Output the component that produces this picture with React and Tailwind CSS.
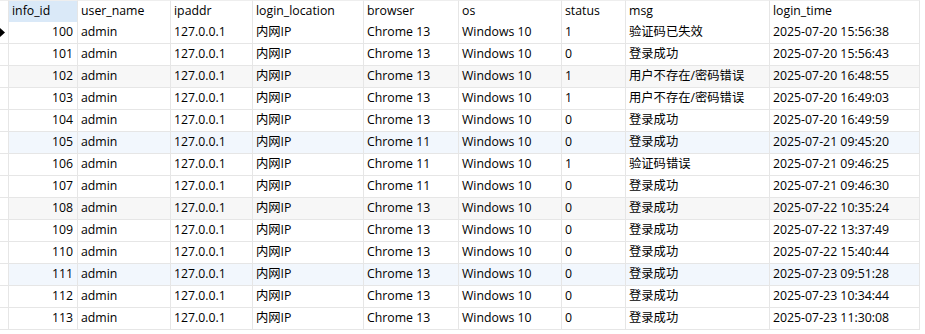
import React from "react";

const rows = [
  [100, "1", "验证码已失效", "2025-07-20 15:56:38", "Chrome 13"],
  [101, "0", "登录成功", "2025-07-20 15:56:43", "Chrome 13"],
  [102, "1", "用户不存在/密码错误", "2025-07-20 16:48:55", "Chrome 13"],
  [103, "1", "用户不存在/密码错误", "2025-07-20 16:49:03", "Chrome 13"],
  [104, "0", "登录成功", "2025-07-20 16:49:59", "Chrome 13"],
  [105, "0", "登录成功", "2025-07-21 09:45:20", "Chrome 11"],
  [106, "1", "验证码错误", "2025-07-21 09:46:25", "Chrome 11"],
  [107, "0", "登录成功", "2025-07-21 09:46:30", "Chrome 11"],
  [108, "0", "登录成功", "2025-07-22 10:35:24", "Chrome 13"],
  [109, "0", "登录成功", "2025-07-22 13:37:49", "Chrome 13"],
  [110, "0", "登录成功", "2025-07-22 15:40:44", "Chrome 13"],
  [111, "0", "登录成功", "2025-07-23 09:51:28", "Chrome 13"],
  [112, "0", "登录成功", "2025-07-23 10:34:44", "Chrome 13"],
  [113, "0", "登录成功", "2025-07-23 11:30:08", "Chrome 13"],
];

const headers = ["info_id", "user_name", "ipaddr", "login_location", "browser", "os", "status", "msg", "login_time"];

const cell = "border-r border-b border-[#e6e6e6] flex items-center whitespace-nowrap overflow-hidden";

export default function App() {
  return (
    <div
      className="w-[925px] h-[334px] bg-white text-black text-[12.3px] overflow-hidden"
      style={{ fontFamily: '"Open Sans", "Noto Sans CJK SC", sans-serif' }}
    >
      <div className="grid grid-cols-[9px_69px_93px_82px_111px_95px_103px_64px_144px_150px] auto-rows-[22px] w-[919px]">
        <div className={`${cell} h-[23px] border-t border-t-[#eeeeee]`}></div>
        {headers.map((h, i) => (
          <div
            key={h}
            className={`${cell} h-[23px] border-t border-t-[#eeeeee] pl-[3px] ${i === 0 ? "bg-[#dae9f8]" : "bg-white"}`}
          >
            {h}
          </div>
        ))}
        {rows.map((r, idx) => {
          const bg = idx % 3 === 2 ? (idx % 6 === 2 ? "bg-[#f7f7f7]" : "bg-[#f2f7fd]") : "bg-white";
          return (
            <React.Fragment key={r[0]}>
              <div className={`${cell} bg-white`}>
                {idx === 0 && (
                  <svg width="7" height="11" viewBox="0 0 7 11" className="-ml-[1px]">
                    <polygon points="0,0 6,5.5 0,11" fill="#000" />
                  </svg>
                )}
              </div>
              <div className={`${cell} ${bg} justify-end pr-[4px]`}>{r[0]}</div>
              <div className={`${cell} ${bg} pl-[3px]`}>admin</div>
              <div className={`${cell} ${bg} pl-[3px]`}>127.0.0.1</div>
              <div className={`${cell} ${bg} pl-[3px]`}>内网IP</div>
              <div className={`${cell} ${bg} pl-[3px]`}>{r[4]}</div>
              <div className={`${cell} ${bg} pl-[3px]`}>Windows 10</div>
              <div className={`${cell} ${bg} pl-[3px]`}>{r[1]}</div>
              <div className={`${cell} ${bg} pl-[3px]`}>{r[2]}</div>
              <div className={`${cell} ${bg} pl-[3px]`}>{r[3]}</div>
            </React.Fragment>
          );
        })}
      </div>
    </div>
  );
}
